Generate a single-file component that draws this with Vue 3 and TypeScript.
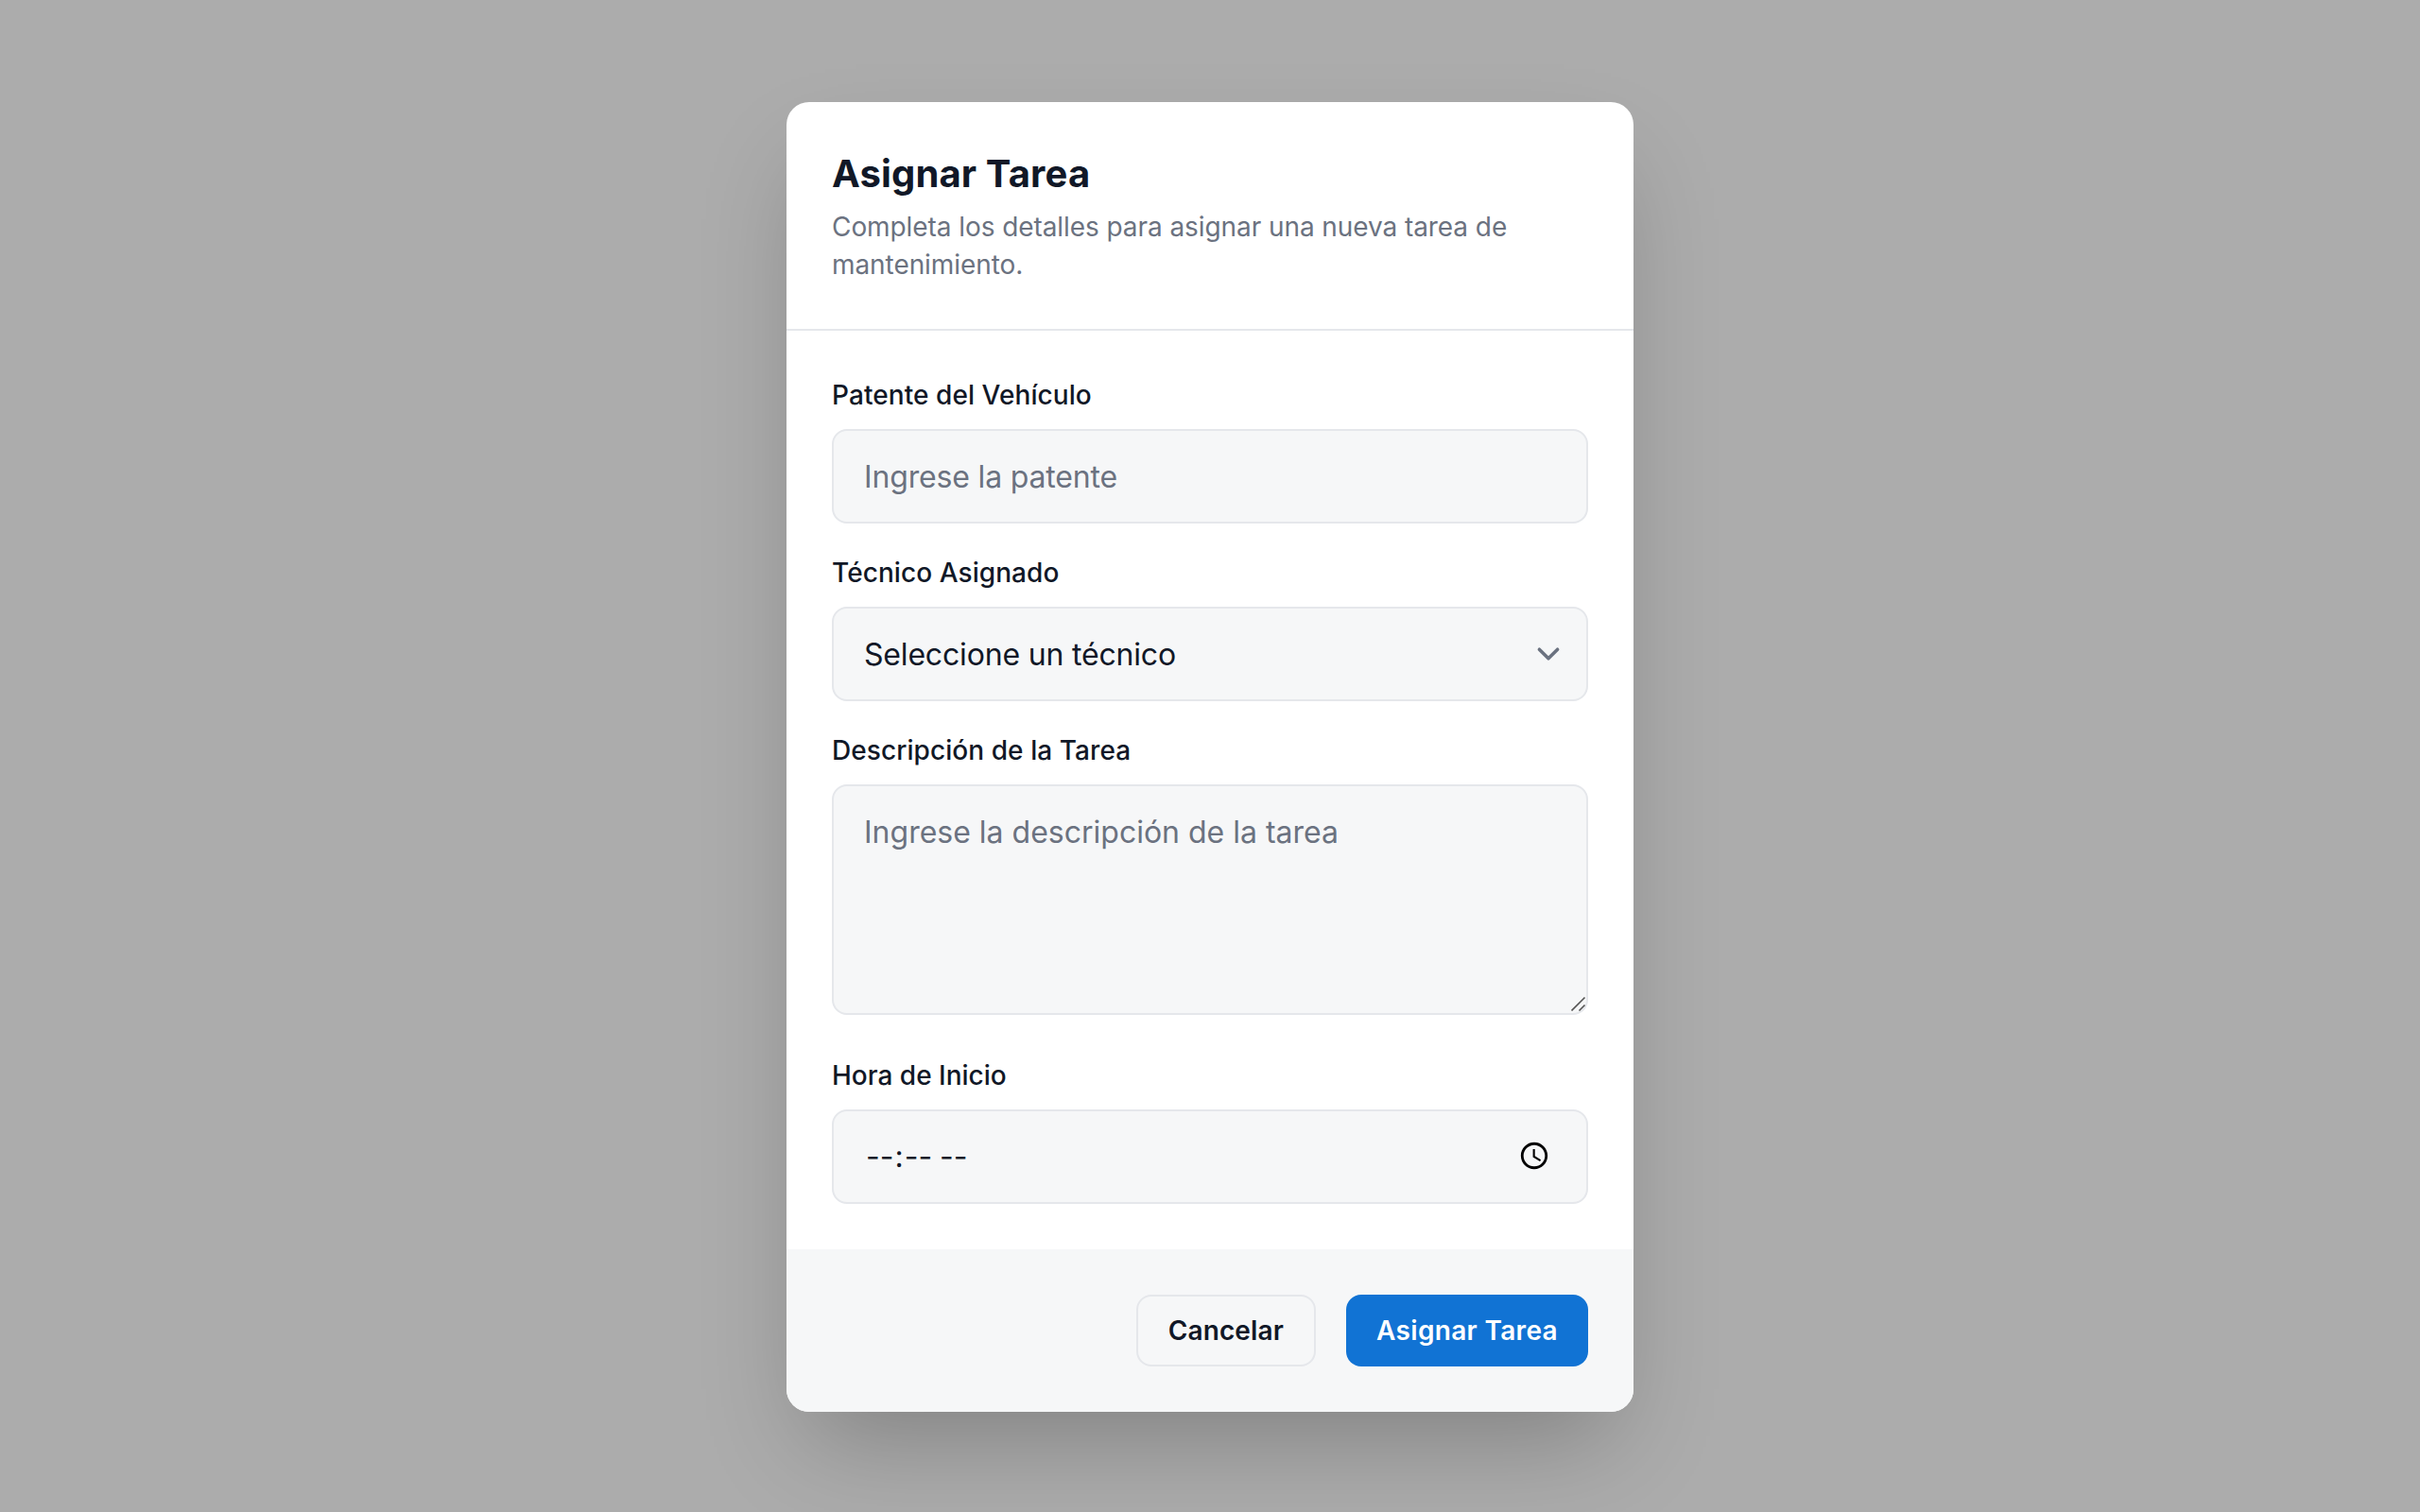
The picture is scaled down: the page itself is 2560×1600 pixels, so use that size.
<script setup lang="ts">
import { ref } from 'vue'

const plate = ref('')
const technician = ref('')
const description = ref('')
const startTime = ref('')
</script>

<template>
  <div class="overlay">
    <form class="modal" @submit.prevent>
      <header class="modal-header">
        <h2 class="title">Asignar Tarea</h2>
        <p class="subtitle">Completa los detalles para asignar una nueva tarea de mantenimiento.</p>
      </header>

      <div class="modal-body">
        <div class="field">
          <label class="label" for="plate">Patente del Vehículo</label>
          <input id="plate" v-model="plate" class="control text" type="text" placeholder="Ingrese la patente" />
        </div>

        <div class="field">
          <label class="label" for="technician">Técnico Asignado</label>
          <div class="control-wrap">
            <select id="technician" v-model="technician" class="control select">
              <option value="">Seleccione un técnico</option>
            </select>
            <svg class="chevron" viewBox="0 0 20 20" fill="none">
              <path d="M6 8l4 4 4-4" stroke="#6b7280" stroke-width="1.5" stroke-linecap="round" stroke-linejoin="round" />
            </svg>
          </div>
        </div>

        <div class="field field-area">
          <label class="label" for="description">Descripción de la Tarea</label>
          <div class="control-wrap">
            <textarea id="description" v-model="description" class="control area" rows="4" placeholder="Ingrese la descripción de la tarea"></textarea>
            <svg class="grip" viewBox="0 0 16 16" fill="none">
              <path d="M.5 15.500l14-14M8.500 15.500l6-6" stroke="#555" stroke-width="1.6" />
            </svg>
          </div>
        </div>

        <div class="field">
          <label class="label label-start" for="start">Hora de Inicio</label>
          <input id="start" v-model="startTime" class="control time" type="time" />
        </div>
      </div>

      <footer class="modal-footer">
        <button class="btn btn-secondary" type="button">Cancelar</button>
        <button class="btn btn-primary" type="submit">Asignar Tarea</button>
      </footer>
    </form>
  </div>
</template>

<style>
body {
  margin: 0;
  background: #acacac;
}
</style>

<style scoped>
* {
  box-sizing: border-box;
}

.overlay {
  display: flex;
  align-items: center;
  justify-content: center;
  height: 100vh;
  overflow: hidden;
  padding-top: 2px;
  background: #acacac;
  color: #111827;
  font-family: Inter, sans-serif;
  font-optical-sizing: none;
}

.modal {
  width: 896px;
  overflow: hidden;
  border-radius: 24px;
  background: #fff;
  box-shadow: 0 50px 100px -24px rgba(0, 0, 0, 0.25);
}

.modal-header {
  padding: 48px;
  border-bottom: 2px solid #e5e7eb;
}

.title {
  margin: 0;
  font-size: 40px;
  font-weight: 700;
  line-height: 56px;
  letter-spacing: 0.13px;
}

.subtitle {
  margin: 8px 0 0;
  color: #6b7280;
  font-size: 28px;
  line-height: 40px;
  letter-spacing: -0.075px;
}

.modal-body {
  display: flex;
  flex-direction: column;
  gap: 32px;
  padding: 48px;
}

.field {
  display: flex;
  flex-direction: column;
  gap: 16px;
}

.field-area {
  padding-bottom: 12px;
}

.label {
  font-size: 28px;
  font-weight: 500;
  line-height: 40px;
  letter-spacing: 0.07px;
}

.label-start {
  letter-spacing: 0;
}

.control-wrap {
  position: relative;
  display: flex;
}

.control {
  display: block;
  width: 100%;
  height: 100px;
  margin: 0;
  padding: 24px 32px;
  border: 2px solid #e5e7eb;
  border-radius: 16px;
  outline: none;
  appearance: none;
  background: #f6f7f8;
  color: #111827;
  font-family: inherit;
  font-size: 32px;
  line-height: 48px;
}

.control::placeholder {
  color: #6b7280;
  opacity: 1;
}

.text {
  letter-spacing: -0.16px;
}

.select {
  padding-top: 25px;
  padding-bottom: 23px;
  letter-spacing: -0.18px;
}

.area {
  height: 244px;
  padding-top: 25px;
  padding-bottom: 23px;
  resize: none;
}

.time {
  padding-right: 35px;
  padding-left: 33px;
}

.time::-webkit-calendar-picker-indicator {
  margin-bottom: 2px;
}

.chevron {
  position: absolute;
  top: 26px;
  right: 18px;
  width: 48px;
  height: 48px;
  pointer-events: none;
}

.grip {
  position: absolute;
  right: 2px;
  bottom: 4px;
  width: 16px;
  height: 16px;
}

.modal-footer {
  display: flex;
  justify-content: flex-end;
  gap: 32px;
  padding: 48px;
  background: #f6f7f8;
}

.btn {
  padding: 16px 32px;
  border: 0;
  border-radius: 16px;
  font-family: inherit;
  font-size: 28px;
  font-weight: 600;
  line-height: 40px;
}

.btn-secondary {
  border: 2px solid #e5e7eb;
  background: transparent;
  color: #111827;
  letter-spacing: 0.14px;
}

.btn-primary {
  background: #1173d4;
  color: #fff;
  letter-spacing: 0.33px;
}
</style>
